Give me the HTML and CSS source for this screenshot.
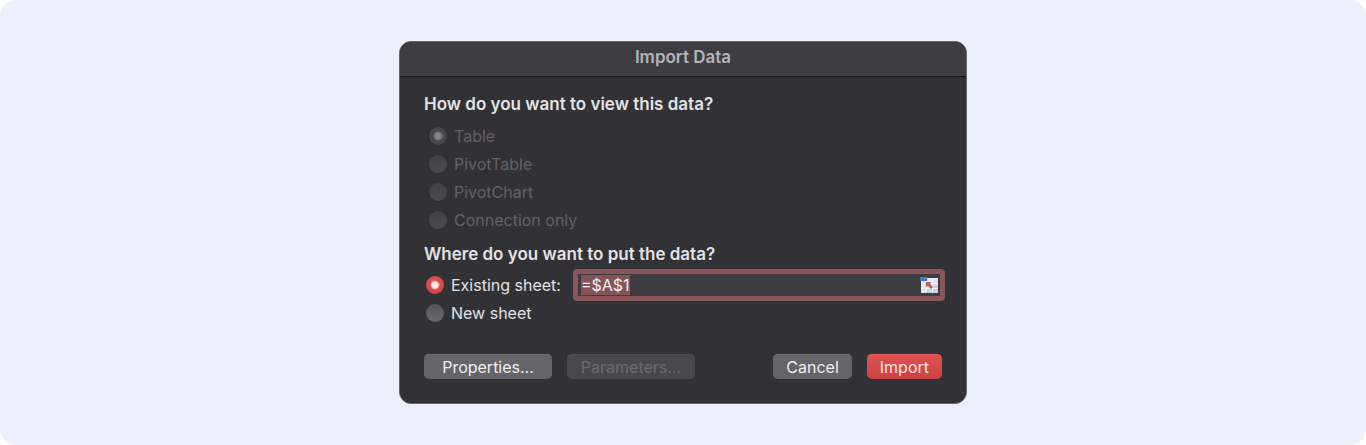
FILE: index.html
```
<!DOCTYPE html>
<html lang="en">
<head>
  <meta charset="UTF-8">
  <meta name="viewport" content="width=device-width, initial-scale=1">
  <title>Import Data</title>
  <link rel="stylesheet" href="styles.css">
</head>
<body>
<main class="stage">
  <form class="dialog">
    <h1 class="dialog-title">Import Data</h1>
    <div class="dialog-body">
      <fieldset class="group view-group" disabled>
        <legend class="question">How do you want to view this data?</legend>
        <div class="row"><input type="radio" id="viewTable" name="view" checked><label for="viewTable">Table</label></div>
        <div class="row"><input type="radio" id="viewPivotTable" name="view"><label for="viewPivotTable">PivotTable</label></div>
        <div class="row"><input type="radio" id="viewPivotChart" name="view"><label for="viewPivotChart">PivotChart</label></div>
        <div class="row"><input type="radio" id="viewConnection" name="view"><label for="viewConnection">Connection only</label></div>
      </fieldset>
      <fieldset class="group place-group">
        <legend class="question">Where do you want to put the data?</legend>
        <div class="row">
          <input type="radio" id="existingSheet" name="place" checked><label for="existingSheet">Existing sheet:</label>
          <div class="range-field">
            <input type="text" id="range" class="range-input" value="=$A$1" aria-label="Cell range" spellcheck="false" autocomplete="off">
            <button type="button" class="range-picker" aria-label="Select range">
              <svg width="18" height="16" viewBox="0 0 18 16">
                <rect x="1" y="1" width="17" height="15" fill="#e3e7f0"/>
                <path d="M12 8h6v8H7v-4h5z" fill="#c3d0e6"/>
                <path d="M1 6.5h17M1 11.5h17M6.500 1v15M12.500 1v15" stroke="#eef1f7" fill="none"/>
                <rect x="0" y="0" width="7" height="4" fill="#4a78bf"/>
                <path d="M6 5h5l-1 2 3 3-2 2-3-3-2 1z" fill="#b85f60"/>
              </svg>
            </button>
          </div>
        </div>
        <div class="row"><input type="radio" id="newSheet" name="place"><label for="newSheet">New sheet</label></div>
      </fieldset>
      <div class="actions">
        <button type="button" class="button button-wide">Properties...</button>
        <button type="button" class="button button-wide" disabled>Parameters...</button>
        <button type="button" class="button button-cancel">Cancel</button>
        <button type="submit" class="button button-primary">Import</button>
      </div>
    </div>
  </form>
</main>
<script>
  // Start with the range selected so typing replaces it
  const range = document.getElementById('range');
  range.focus();
  range.select();
</script>
</body>
</html>
```
FILE: styles.css
```
* {
  box-sizing: border-box;
}

body {
  margin: 0;
  background: #fff;
  font-family: Inter, "Liberation Sans", sans-serif;
  font-size: 16px;
  line-height: 20px;
  color: #e3e2e5;
}

.stage {
  display: flex;
  align-items: center;
  justify-content: center;
  min-height: 100vh;
  background: #ecf0fd;
  border-radius: 16px;
}

.dialog {
  width: 100%;
  max-width: 568px;
  background: #323136;
  border: 1px solid #65676d;
  border-radius: 12px;
  overflow: hidden;
}

.dialog-title {
  margin: 0;
  padding: 5px 0 9px;
  background: #3e3d41;
  border-bottom: 1px solid #151417;
  color: #b5b4b8;
  font-size: 17px;
  font-weight: 600;
  text-align: center;
}

.dialog-body {
  padding: 17px 24px 24px;
}

.group {
  margin: 0;
  padding: 0;
  border: 0;
  min-width: 0;
}

.question {
  padding: 0;
  font-size: 17px;
  font-weight: 600;
}

.row {
  display: flex;
  align-items: center;
  gap: 7px;
  height: 28px;
}

.view-group {
  color: #626166;
}

.view-group .question {
  margin-bottom: 8px;
  color: #e3e2e5;
}

.view-group .row {
  padding-left: 5px;
}

.place-group {
  margin-top: 10px;
}

.place-group .question {
  margin-bottom: 7px;
}

.place-group .row {
  padding-left: 2px;
}

input[type="radio"] {
  appearance: none;
  flex: none;
  width: 18px;
  height: 18px;
  margin: 0;
  border-radius: 50%;
  background: linear-gradient(#545357, #6b6a6e);
}

input[type="radio"]:checked {
  background: radial-gradient(circle, #fbe9e8 3px, transparent 5px), linear-gradient(#e2504e, #d04443);
}

input[type="radio"]:disabled {
  background: linear-gradient(#414044, #4b4a4e);
}

input[type="radio"]:disabled:checked {
  background: radial-gradient(circle, #858488 3px, #48474b 5px);
}

.range-field {
  display: flex;
  align-items: center;
  flex: 1;
  height: 32px;
  margin-left: 5px;
  margin-right: -3px;
  padding-right: 2px;
  background: #3d3c41;
  border: 5px solid #8b565a;
  border-radius: 4px;
}

.range-input {
  flex: 1;
  min-width: 0;
  height: 22px;
  padding: 0 3px;
  border: 0;
  outline: 0;
  background: none;
  color: #f2f0f2;
  font: inherit;
}

.range-input::selection {
  background: #855457;
  color: #f2f0f2;
}

.range-picker {
  display: flex;
  padding: 0;
  border: 0;
  background: none;
}

.actions {
  display: flex;
  gap: 15px;
  margin-top: 27px;
}

.button {
  height: 25px;
  padding: 0 13px;
  border: 0;
  border-radius: 5px;
  background: #656469;
  box-shadow: inset 0 1px #6f6e73;
  color: #efeef0;
  font: inherit;
  line-height: 24px;
}

.button:disabled {
  background: #48474b;
  box-shadow: inset 0 1px #4e4d51;
  color: #6c6b70;
}

.button-wide {
  width: 128px;
}

.button-cancel {
  margin-left: auto;
}

.button-primary {
  background: linear-gradient(#e05251, #c94342);
  box-shadow: inset 0 1px #e25c5a;
  color: #fbe4e3;
}
```
